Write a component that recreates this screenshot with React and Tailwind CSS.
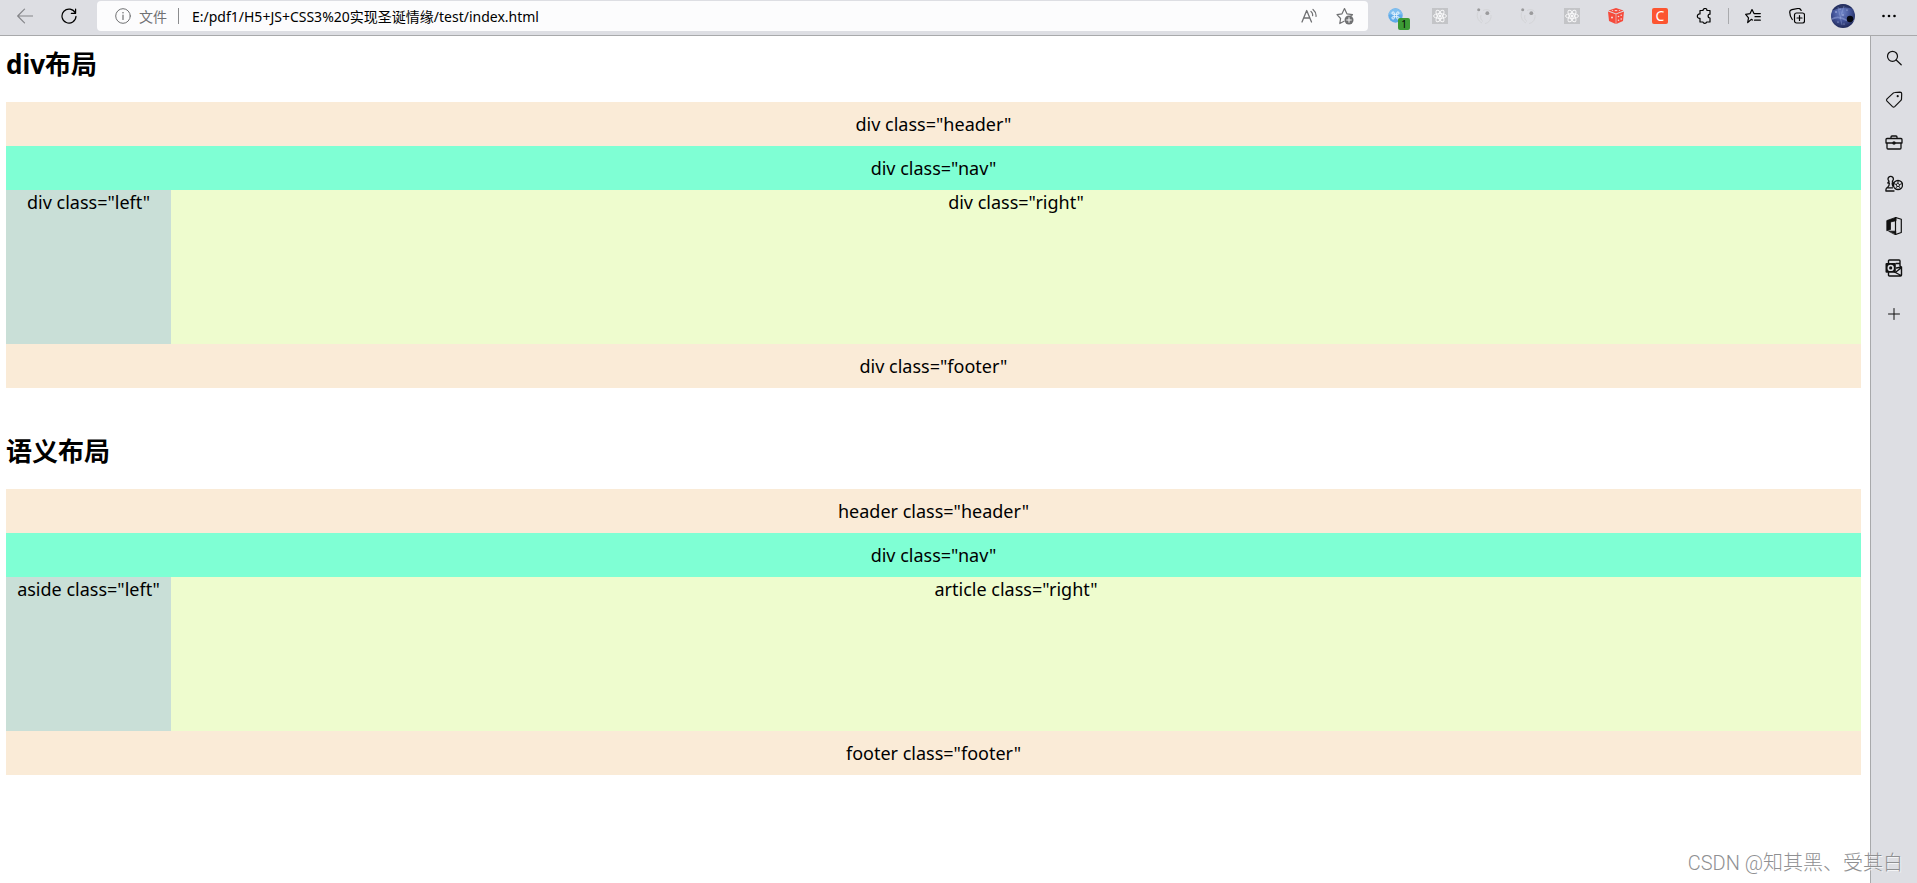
import React from "react";

function Icon({ size = "size-4", box = "0 0 16 16", children }) {
  return (
    <svg viewBox={box} className={`${size} shrink-0`} fill="none" stroke="currentColor" strokeWidth="1" strokeLinecap="round" strokeLinejoin="round" aria-hidden="true">
      {children}
    </svg>
  );
}

const BackIcon = () => (
  <Icon><path d="M15.500 8H.7M7.500 1.200.7 8l6.800 6.800" strokeWidth="1.200" /></Icon>
);

const ReloadIcon = () => (
  <Icon>
    <path d="M14.300 5A7 7 0 1 0 15 8.300" strokeWidth="1.200" />
    <path d="M14.600 1v4.300h-4.300" strokeWidth="1.200" />
  </Icon>
);

const InfoIcon = () => (
  <Icon>
    <circle cx="8" cy="8" r="7.300" />
    <path d="M8 7v4.500" strokeWidth="1.200" />
    <circle cx="8" cy="4.700" r=".8" fill="currentColor" stroke="none" />
  </Icon>
);

const ReadAloudIcon = () => (
  <Icon>
    <path d="M1 14 5.700 2.500 10.500 14M2.600 10h6.300" strokeWidth="1.300" />
    <path d="M10 3.500q2 1.700 1.600 4.200M12 1.500q3.500 3 3 7" strokeWidth="1.200" />
  </Icon>
);

const AddFavoriteIcon = () => (
  <Icon size="size-[18px]" box="0 0 18 18">
    <path d="M8 14.300l-4.200 2.200.8-5L1 7.700l5-.9L8.500 1.500l2.400 5.300 5.600.9-2 1.600" strokeWidth="1.200" />
    <circle cx="13" cy="13" r="4.500" fill="currentColor" stroke="none" />
    <path d="M13 10.700v4.600M10.700 13h4.600" stroke="#fcfcfd" />
  </Icon>
);

const CommandIcon = () => (
  <svg viewBox="0 0 16 16" className="size-4" fill="none" aria-hidden="true">
    <circle cx="7.500" cy="7.500" r="7.200" fill="#5fabea" />
    <path d="M.4 6.500a7.200 7.200 0 0 1 14.200 0z" fill="#80bff0" />
    <path d="M6.300 8.700V6.300h2.400v2.400zM6.300 6.300H5a1.200 1.200 0 1 1 1.300-1.200zM8.700 6.300V5a1.200 1.200 0 1 1 1.300 1.300zM6.300 8.700V10A1.200 1.200 0 1 1 5 8.700zM8.700 8.700H10A1.200 1.200 0 1 1 8.700 10z" stroke="#f4faff" strokeWidth=".9" />
  </svg>
);

const AtomIcon = () => (
  <svg viewBox="0 0 16 16" className="size-4" fill="none" stroke="#f8f8f9" strokeWidth="1" aria-hidden="true">
    <path d="M0 0h16v16H0z" fill="#c3c4c7" stroke="none" />
    <ellipse cx="8" cy="8" rx="6.500" ry="2.400" />
    <ellipse cx="8" cy="8" rx="6.500" ry="2.400" transform="rotate(60 8 8)" />
    <ellipse cx="8" cy="8" rx="6.500" ry="2.400" transform="rotate(120 8 8)" />
    <circle cx="8" cy="8" r="1.500" fill="#f8f8f9" stroke="none" />
  </svg>
);

const FaintIcon = () => (
  <svg viewBox="0 0 16 16" className="size-4" fill="none" stroke="#d3d4d7" strokeWidth="1" aria-hidden="true">
    <path d="M2 4C0 8 2 13 6 15M5 7c-1 3 0 5 2 6.500M15 7c.5 4-2 8-6 8.500M7 2.500c3-1.500 6-1 7.500 1" />
    <circle cx="2.700" cy="1.800" r="1.500" fill="#9b9b9d" stroke="none" />
    <circle cx="11.300" cy="5.200" r="1.900" fill="#9b9b9d" stroke="none" />
  </svg>
);

const DiceIcon = () => (
  <svg viewBox="0 0 16 16" className="size-4" aria-hidden="true">
    <path d="M8 0l7.500 2.500L8 5.500.5 2.500zM0 3.400l7.700 2.900V16L1 13zM16 3.400 8.300 6.300V16L15 13z" fill="#f64b3c" />
    <g fill="#f3dcdd">
      <ellipse cx="8" cy="2.600" rx="1.500" ry=".6" />
      <ellipse cx="4.500" cy="2.500" rx=".9" ry=".4" />
      <ellipse cx="11.500" cy="2.500" rx=".9" ry=".4" />
      <circle cx="4" cy="9.500" r="1" />
      <circle cx="10.500" cy="8.500" r=".8" />
      <circle cx="13.200" cy="7.300" r=".8" />
      <circle cx="10.500" cy="12.300" r=".8" />
      <circle cx="13.200" cy="11" r=".8" />
    </g>
  </svg>
);

const PuzzleIcon = () => (
  <Icon>
    <path d="M4 2.500h3a2 2 0 0 1 4 0h3v3.700a1.900 1.900 0 0 0 0 3.800v4h-3.300a2 2 0 0 1-3.800 0H4v-3.700a2.200 2.200 0 1 1 0-4.300z" strokeWidth="1.200" />
  </Icon>
);

const FavoritesIcon = () => (
  <Icon>
    <path d="M7.500 12 6.300 11.400 2.700 14.500l.8-4.700L.7 6.300l4.400-.7L7 1.500l2 4.100h6.300M10 8.700h5.300M9.500 12.200h5.800" strokeWidth="1.200" />
  </Icon>
);

const CollectionsIcon = () => (
  <Icon>
    <rect x="5.500" y="5" width="10" height="10" rx="2" strokeWidth="1.200" />
    <path d="M10.500 7.500v5M8 10h5M3.300 11.500C1.500 9 .7 6.500.7 4c0-1.500 1-2 2.200-2.300l6-1.200c1.800-.3 2.700.5 3.300 2" strokeWidth="1.200" />
  </Icon>
);

const Avatar = () => (
  <svg viewBox="0 0 24 24" className="size-6" aria-hidden="true">
    <defs>
      <radialGradient id="sky" cx=".45" cy=".35" r=".7">
        <stop offset="0" stopColor="#7085c8" />
        <stop offset=".5" stopColor="#44559a" />
        <stop offset="1" stopColor="#1b2350" />
      </radialGradient>
      <clipPath id="disc"><circle cx="12" cy="12" r="12" /></clipPath>
    </defs>
    <g clipPath="url(#disc)">
      <path d="M0 0h24v24H0z" fill="url(#sky)" />
      <path d="M0 0h24v5Q12 1 0 7z" fill="#10183a" opacity=".6" />
      <path d="M1 15c5-3 9-2 14 1l8 1" stroke="#8d9cd5" strokeWidth="1.500" opacity=".6" fill="none" />
      <path d="M7 3l4 18M13 2 9 15" stroke="#a4b2e3" strokeWidth=".7" opacity=".5" />
      <circle cx="19" cy="15" r="3.200" fill="#04060f" />
      <g fill="#c7d2f6">
        <circle cx="5" cy="8" r=".7" /><circle cx="9" cy="5" r=".6" /><circle cx="16" cy="6" r=".6" />
        <circle cx="12" cy="11" r=".7" /><circle cx="7" cy="18" r=".6" /><circle cx="13" cy="20" r=".5" />
      </g>
    </g>
  </svg>
);

const DotsIcon = () => (
  <Icon>
    <g fill="currentColor" stroke="none">
      <circle cx="2.500" cy="8" r="1.300" /><circle cx="8" cy="8" r="1.300" /><circle cx="13.500" cy="8" r="1.300" />
    </g>
  </Icon>
);

const SearchIcon = () => (
  <Icon>
    <circle cx="6.500" cy="6.300" r="5" strokeWidth="1.200" />
    <path d="m10.200 10 5 4.800" strokeWidth="1.200" />
  </Icon>
);

const TagIcon = () => (
  <Icon size="size-[18px]" box="0 0 18 18">
    <path d="M9.800 1.500 15 1.100q1.700 0 1.700 1.600l-.2 5.400q-.1.800-.6 1.300l-6.200 6.200q-1.100 1-2.200 0L2 10.100q-1-1.100 0-2.200l6.200-5.800q.7-.6 1.600-.6z" strokeWidth="1.200" />
    <circle cx="12.700" cy="5.200" r="1.100" fill="currentColor" stroke="none" />
  </Icon>
);

const ToolboxIcon = () => (
  <Icon size="size-[18px]" box="0 0 18 18">
    <path d="M6 5.500V4Q6 3 7 3h4q1 0 1 1v1.500M2 5.500h14q1 0 1 1V10H1V6.500q0-1 1-1zM2 10v5q0 1 1 1h12q1 0 1-1v-5" strokeWidth="1.300" />
    <circle cx="9" cy="10" r="1.700" fill="currentColor" stroke="none" />
  </Icon>
);

const GamesIcon = () => (
  <Icon size="size-[18px]" box="0 0 18 18">
    <path d="M9 16H1c-.4-2 .3-3.200 1.800-4Q4.500 11 4.300 8H2.800l1.300-1.800a2.700 2.700 0 1 1 3.200 0L8.500 8H7.200q0 2 .8 3.500M2 12.800h5.500" strokeWidth="1.300" />
    <circle cx="13" cy="10" r="4.500" strokeWidth="1.300" />
    <path d="M13 8.500l1.600 1.100-.6 1.900h-2l-.6-1.900zM13 5.500v3M17.300 8.500l-2.700 1.100M15.600 13.600 14 11.500M10.400 13.600 12 11.500M8.700 8.500l2.700 1.100" strokeWidth=".9" />
  </Icon>
);

const OfficeIcon = () => (
  <Icon size="size-[18px]" box="0 0 18 18">
    <path d="M10.500.5 16.300 2.300v13.200l-5.800 2z" strokeWidth="1.200" />
    <path d="M10.700.4 1.800 3.600v10.200l3.700-1.300V5l5.200-1.200zM4 14.200h6.700v3.400z" fill="currentColor" strokeWidth=".8" />
  </Icon>
);

const OutlookIcon = () => (
  <Icon size="size-[18px]" box="0 0 18 18">
    <path d="M3.500 4V2q0-1 1-1H14q1 0 1 1v5l1.500 1v8q0 1-1 1h-11q-1 0-1-1v-2.500M15 4.500h-4M11.500 9l5-1M9.500 13l6.500 3.500M11.500 12.500l4.500-3.500" strokeWidth="1.400" />
    <path d="M1.500 4h8.300q1 0 1 1v7.800q0 1-1 1H1.500q-1 0-1-1V5q0-1 1-1z" fill="currentColor" stroke="none" />
    <circle cx="5.700" cy="8.900" r="2.400" stroke="#dddee3" strokeWidth="1.600" />
  </Icon>
);

const PlusIcon = () => (
  <Icon><path d="M8 2.500v11M2.500 8h11" /></Icon>
);

function ToolButton({ label, width = "w-11", children }) {
  return (
    <button type="button" aria-label={label} className={`flex h-8 ${width} shrink-0 items-center justify-center`}>
      {children}
    </button>
  );
}

function Toolbar() {
  return (
    <header className="flex h-9 items-start border-b border-[#a8a9ab] bg-[#dddee3] pr-[6px] pl-[3px]">
      <span className="text-[#85868a]"><ToolButton label="后退"><BackIcon /></ToolButton></span>
      <ToolButton label="刷新"><ReloadIcon /></ToolButton>
      <form className="mx-[6px] mt-px flex h-[30px] min-w-0 flex-1 items-center rounded bg-[#fcfcfd] pr-[14px] pl-[18px] text-[14px] text-[#707173]" onSubmit={(e) => e.preventDefault()}>
        <InfoIcon />
        <label htmlFor="url" className="ml-2">文件</label>
        <span className="mr-[13px] ml-[11px] h-4 w-px bg-[#8b8c8e]" />
        <input id="url" type="text" defaultValue="E:/pdf1/H5+JS+CSS3%20实现圣诞情缘/test/index.html" className="min-w-0 flex-1 bg-transparent text-[14px] text-black outline-none" />
        <button type="button" aria-label="大声朗读"><ReadAloudIcon /></button>
        <button type="button" aria-label="添加到收藏夹" className="ml-[19px]"><AddFavoriteIcon /></button>
      </form>
      <ToolButton label="快捷命令">
        <span className="relative">
          <CommandIcon />
          <span className="absolute top-[10px] left-[10px] flex h-3 w-3 items-center justify-center rounded-xs bg-[#3c9a35] text-[10px] leading-3 text-black">1</span>
        </span>
      </ToolButton>
      <ToolButton label="React"><AtomIcon /></ToolButton>
      <ToolButton label="扩展一"><FaintIcon /></ToolButton>
      <ToolButton label="扩展二"><FaintIcon /></ToolButton>
      <ToolButton label="React 开发"><AtomIcon /></ToolButton>
      <ToolButton label="骰子"><DiceIcon /></ToolButton>
      <ToolButton label="CSDN">
        <span className="flex size-4 items-center justify-center rounded-xs bg-[#fc5531] text-[14px] leading-4 text-white">C</span>
      </ToolButton>
      <ToolButton label="扩展"><PuzzleIcon /></ToolButton>
      <span className="mx-[2px] mt-2 h-4 w-px bg-[#a9aaad]" />
      <ToolButton label="收藏夹"><FavoritesIcon /></ToolButton>
      <ToolButton label="集锦"><CollectionsIcon /></ToolButton>
      <ToolButton label="个人资料" width="w-12"><Avatar /></ToolButton>
      <ToolButton label="更多"><DotsIcon /></ToolButton>
    </header>
  );
}

const sideTools = [
  ["搜索", SearchIcon],
  ["购物", TagIcon],
  ["工具", ToolboxIcon],
  ["游戏", GamesIcon],
  ["Office", OfficeIcon],
  ["Outlook", OutlookIcon],
];

function Sidebar() {
  return (
    <nav aria-label="侧边栏" className="flex w-[47px] shrink-0 flex-col border-l border-[#a8a9ab] bg-[#dddee3] pt-px text-[#111]">
      {sideTools.map(([label, Glyph]) => (
        <button key={label} type="button" aria-label={label} className="flex h-[42px] items-center justify-center"><Glyph /></button>
      ))}
      <button type="button" aria-label="添加" className="mt-1 flex h-[42px] items-center justify-center"><PlusIcon /></button>
    </nav>
  );
}

function LayoutDemo({ title, header, nav, left, right, footer }) {
  return (
    <section>
      <h2 className="mb-5 text-[26px] leading-9 font-bold">{title}</h2>
      <div className="text-center text-[18px] leading-6">
        <div className="bg-[#faebd7] py-[10px]">{header}</div>
        <div className="bg-[#7fffd4] py-[10px]">{nav}</div>
        <div className="flex h-[154px]">
          <div className="w-[165px] shrink-0 bg-[#c9dfd7]">{left}</div>
          <div className="flex-1 bg-[#eefcce]">{right}</div>
        </div>
        <div className="bg-[#faebd7] py-[10px]">{footer}</div>
      </div>
    </section>
  );
}

export default function App() {
  return (
    <div className="relative flex min-h-screen flex-col bg-white font-['Noto_Sans','Noto_Sans_CJK_SC',sans-serif] text-black">
      <Toolbar />
      <div className="flex flex-1">
        <main className="flex min-w-0 flex-1 flex-col gap-[45px] pt-[10px] pr-[9px] pl-[6px]">
          <LayoutDemo
            title="div布局"
            header={'div class="header"'}
            nav={'div class="nav"'}
            left={'div class="left"'}
            right={'div class="right"'}
            footer={'div class="footer"'}
          />
          <LayoutDemo
            title="语义布局"
            header={'header class="header"'}
            nav={'div class="nav"'}
            left={'aside class="left"'}
            right={'article class="right"'}
            footer={'footer class="footer"'}
          />
        </main>
        <Sidebar />
      </div>
      <p className="absolute right-[14px] bottom-1 font-[Roboto,'Noto_Sans_CJK_SC',sans-serif] text-[20px] leading-8 font-light text-[#8f9092] [text-shadow:1px_1px_0_#ffffffb0]">CSDN @知其黑、受其白</p>
    </div>
  );
}
